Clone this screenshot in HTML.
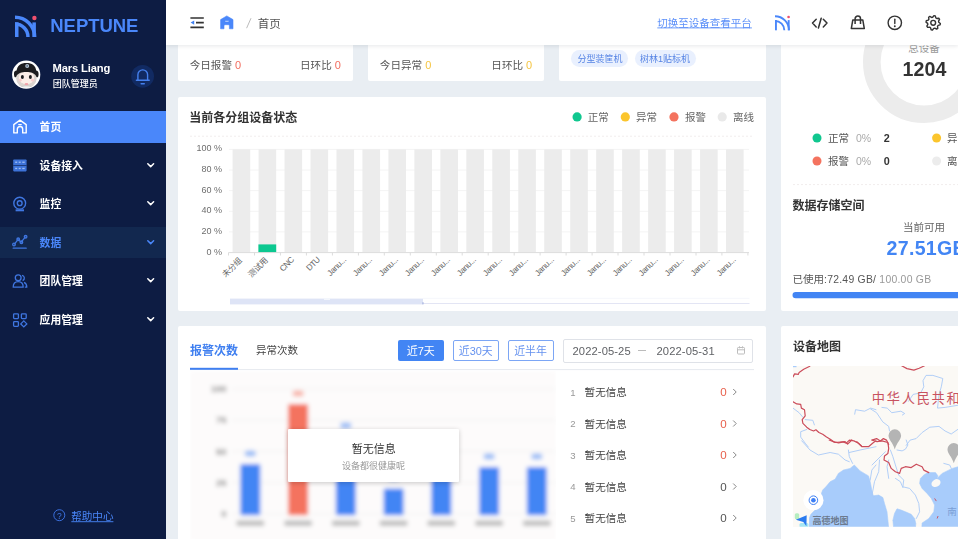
<!DOCTYPE html><html lang="zh-CN"><head><meta charset="utf-8"><title>NEPTUNE - 首页</title><style>

html,body{margin:0;padding:0;}
body{width:958px;height:539px;overflow:hidden;position:relative;background:#e9eef3;font-family:"Liberation Sans","Noto Sans CJK SC",sans-serif;}
#cards div,#ui div{position:absolute;}
svg{position:absolute;left:0;top:0;overflow:hidden;}
svg text{font-family:"Liberation Sans","Noto Sans CJK SC",sans-serif;}
.t{position:absolute;white-space:pre;line-height:1;}
.h{position:absolute;white-space:pre;line-height:1;color:transparent;opacity:0;pointer-events:none;}
#side{position:absolute;left:0;top:0;width:166px;height:539px;background:#0d1c43;}
#head{position:absolute;left:166px;top:0;width:792px;height:45.2px;background:#fff;box-shadow:0 1px 4px rgba(0,21,41,.10);}
#act{position:absolute;left:0;top:110.5px;width:166px;height:32.5px;background:#4a87fa;}
#hov{position:absolute;left:0;top:227px;width:166px;height:30.5px;background:#12284f;}
#ov{position:absolute;left:287.6px;top:429px;width:171.4px;height:53px;background:#fff;box-shadow:0 1px 5px rgba(0,0,0,.2);border-radius:1px;}

</style></head><body>
<div id="cards"><div style="left:178.00px;top:40.00px;width:175.30px;height:41.40px;background:#fff;border-radius:2px;"></div><div style="left:368.00px;top:40.00px;width:176.30px;height:41.40px;background:#fff;border-radius:2px;"></div><div style="left:559.30px;top:40.00px;width:207.00px;height:41.40px;background:#fff;border-radius:2px;"></div><div style="left:178.00px;top:96.50px;width:588.30px;height:214.20px;background:#fff;border-radius:2px;"></div><div style="left:178.00px;top:326.00px;width:588.30px;height:220.00px;background:#fff;border-radius:2px;"></div><div style="left:781.00px;top:40.00px;width:180.00px;height:270.70px;background:#fff;border-radius:2px;"></div><div style="left:781.00px;top:325.60px;width:180.00px;height:220.00px;background:#fff;border-radius:2px;"></div><div style="left:570.80px;top:49.70px;width:57.20px;height:17.40px;background:#e9f0fe;border-radius:9px;"></div><div style="left:634.50px;top:49.70px;width:61.20px;height:17.40px;background:#e9f0fe;border-radius:9px;"></div><div style="left:398.00px;top:340.00px;width:45.50px;height:20.80px;background:#4285f4;border-radius:2px;"></div><div style="left:452.70px;top:340.00px;width:46.00px;height:20.80px;background:#fff;border-radius:2px;border:1px solid #7ca6f5;box-sizing:border-box;"></div><div style="left:507.50px;top:340.00px;width:46.00px;height:20.80px;background:#fff;border-radius:2px;border:1px solid #7ca6f5;box-sizing:border-box;"></div><div style="left:563.30px;top:339.00px;width:190.00px;height:23.50px;background:#fff;border-radius:2px;border:1px solid #dfe2e8;box-sizing:border-box;"></div></div>
<svg width="958" height="539" viewBox="0 0 958 539"><line x1="190" y1="136.2" x2="754" y2="136.2" stroke="#f1eded" stroke-width="1" stroke-dasharray="2 2"/><line x1="793" y1="184.6" x2="958" y2="184.6" stroke="#f1eded" stroke-width="1" stroke-dasharray="2 2"/><circle cx="577.1" cy="116.9" r="4.6" fill="#10c78f"/><circle cx="625.3" cy="116.9" r="4.6" fill="#fbc52d"/><circle cx="674.0" cy="116.9" r="4.6" fill="#f4735f"/><circle cx="722.2" cy="116.9" r="4.6" fill="#e9e9e9"/><line x1="229" y1="149.4" x2="749" y2="149.4" stroke="#f4f4f4" stroke-width="1"/><line x1="229" y1="170.0" x2="749" y2="170.0" stroke="#f4f4f4" stroke-width="1"/><line x1="229" y1="190.6" x2="749" y2="190.6" stroke="#f4f4f4" stroke-width="1"/><line x1="229" y1="211.3" x2="749" y2="211.3" stroke="#f4f4f4" stroke-width="1"/><line x1="229" y1="231.9" x2="749" y2="231.9" stroke="#f4f4f4" stroke-width="1"/><rect x="232.60" y="149.4" width="17.6" height="103" fill="#ececec"/><rect x="258.57" y="149.4" width="17.6" height="103" fill="#ececec"/><rect x="284.54" y="149.4" width="17.6" height="103" fill="#ececec"/><rect x="310.51" y="149.4" width="17.6" height="103" fill="#ececec"/><rect x="336.48" y="149.4" width="17.6" height="103" fill="#ececec"/><rect x="362.45" y="149.4" width="17.6" height="103" fill="#ececec"/><rect x="388.42" y="149.4" width="17.6" height="103" fill="#ececec"/><rect x="414.39" y="149.4" width="17.6" height="103" fill="#ececec"/><rect x="440.36" y="149.4" width="17.6" height="103" fill="#ececec"/><rect x="466.33" y="149.4" width="17.6" height="103" fill="#ececec"/><rect x="492.30" y="149.4" width="17.6" height="103" fill="#ececec"/><rect x="518.27" y="149.4" width="17.6" height="103" fill="#ececec"/><rect x="544.24" y="149.4" width="17.6" height="103" fill="#ececec"/><rect x="570.21" y="149.4" width="17.6" height="103" fill="#ececec"/><rect x="596.18" y="149.4" width="17.6" height="103" fill="#ececec"/><rect x="622.15" y="149.4" width="17.6" height="103" fill="#ececec"/><rect x="648.12" y="149.4" width="17.6" height="103" fill="#ececec"/><rect x="674.09" y="149.4" width="17.6" height="103" fill="#ececec"/><rect x="700.06" y="149.4" width="17.6" height="103" fill="#ececec"/><rect x="726.03" y="149.4" width="17.6" height="103" fill="#ececec"/><rect x="258.4" y="244.4" width="17.8" height="8.2" fill="#0cc890"/><line x1="228.5" y1="252.6" x2="749" y2="252.6" stroke="#dcdcdc" stroke-width="1"/><line x1="228.5" y1="252.6" x2="228.5" y2="255.5" stroke="#dcdcdc" stroke-width="1"/><line x1="254.5" y1="252.6" x2="254.5" y2="255.5" stroke="#dcdcdc" stroke-width="1"/><line x1="280.4" y1="252.6" x2="280.4" y2="255.5" stroke="#dcdcdc" stroke-width="1"/><line x1="306.4" y1="252.6" x2="306.4" y2="255.5" stroke="#dcdcdc" stroke-width="1"/><line x1="332.4" y1="252.6" x2="332.4" y2="255.5" stroke="#dcdcdc" stroke-width="1"/><line x1="358.4" y1="252.6" x2="358.4" y2="255.5" stroke="#dcdcdc" stroke-width="1"/><line x1="384.3" y1="252.6" x2="384.3" y2="255.5" stroke="#dcdcdc" stroke-width="1"/><line x1="410.3" y1="252.6" x2="410.3" y2="255.5" stroke="#dcdcdc" stroke-width="1"/><line x1="436.3" y1="252.6" x2="436.3" y2="255.5" stroke="#dcdcdc" stroke-width="1"/><line x1="462.2" y1="252.6" x2="462.2" y2="255.5" stroke="#dcdcdc" stroke-width="1"/><line x1="488.2" y1="252.6" x2="488.2" y2="255.5" stroke="#dcdcdc" stroke-width="1"/><line x1="514.2" y1="252.6" x2="514.2" y2="255.5" stroke="#dcdcdc" stroke-width="1"/><line x1="540.1" y1="252.6" x2="540.1" y2="255.5" stroke="#dcdcdc" stroke-width="1"/><line x1="566.1" y1="252.6" x2="566.1" y2="255.5" stroke="#dcdcdc" stroke-width="1"/><line x1="592.1" y1="252.6" x2="592.1" y2="255.5" stroke="#dcdcdc" stroke-width="1"/><line x1="618.0" y1="252.6" x2="618.0" y2="255.5" stroke="#dcdcdc" stroke-width="1"/><line x1="644.0" y1="252.6" x2="644.0" y2="255.5" stroke="#dcdcdc" stroke-width="1"/><line x1="670.0" y1="252.6" x2="670.0" y2="255.5" stroke="#dcdcdc" stroke-width="1"/><line x1="696.0" y1="252.6" x2="696.0" y2="255.5" stroke="#dcdcdc" stroke-width="1"/><line x1="721.9" y1="252.6" x2="721.9" y2="255.5" stroke="#dcdcdc" stroke-width="1"/><line x1="747.9" y1="252.6" x2="747.9" y2="255.5" stroke="#dcdcdc" stroke-width="1"/><g transform="translate(240.4 258.5) rotate(-45)"><text x="-24.30" y="3.08" font-size="8.1" fill="#666">未分组</text></g><g transform="translate(266.4 258.5) rotate(-45)"><text x="-24.30" y="3.08" font-size="8.1" fill="#666">测试用</text></g><text transform="translate(292.7 258.0) rotate(-45)" text-anchor="end" font-size="8.3" fill="#666" y="3" textLength="16.72">CNC</text><text transform="translate(318.7 258.0) rotate(-45)" text-anchor="end" font-size="8.3" fill="#666" y="3" textLength="15.86">DTU</text><text transform="translate(344.7 258.0) rotate(-45)" text-anchor="end" font-size="8.3" fill="#666" y="3" textLength="23.17">Janu...</text><text transform="translate(370.6 258.0) rotate(-45)" text-anchor="end" font-size="8.3" fill="#666" y="3" textLength="23.17">Janu...</text><text transform="translate(396.6 258.0) rotate(-45)" text-anchor="end" font-size="8.3" fill="#666" y="3" textLength="23.17">Janu...</text><text transform="translate(422.6 258.0) rotate(-45)" text-anchor="end" font-size="8.3" fill="#666" y="3" textLength="23.17">Janu...</text><text transform="translate(448.6 258.0) rotate(-45)" text-anchor="end" font-size="8.3" fill="#666" y="3" textLength="23.17">Janu...</text><text transform="translate(474.5 258.0) rotate(-45)" text-anchor="end" font-size="8.3" fill="#666" y="3" textLength="23.17">Janu...</text><text transform="translate(500.5 258.0) rotate(-45)" text-anchor="end" font-size="8.3" fill="#666" y="3" textLength="23.17">Janu...</text><text transform="translate(526.5 258.0) rotate(-45)" text-anchor="end" font-size="8.3" fill="#666" y="3" textLength="23.17">Janu...</text><text transform="translate(552.4 258.0) rotate(-45)" text-anchor="end" font-size="8.3" fill="#666" y="3" textLength="23.17">Janu...</text><text transform="translate(578.4 258.0) rotate(-45)" text-anchor="end" font-size="8.3" fill="#666" y="3" textLength="23.17">Janu...</text><text transform="translate(604.4 258.0) rotate(-45)" text-anchor="end" font-size="8.3" fill="#666" y="3" textLength="23.17">Janu...</text><text transform="translate(630.3 258.0) rotate(-45)" text-anchor="end" font-size="8.3" fill="#666" y="3" textLength="23.17">Janu...</text><text transform="translate(656.3 258.0) rotate(-45)" text-anchor="end" font-size="8.3" fill="#666" y="3" textLength="23.17">Janu...</text><text transform="translate(682.3 258.0) rotate(-45)" text-anchor="end" font-size="8.3" fill="#666" y="3" textLength="23.17">Janu...</text><text transform="translate(708.3 258.0) rotate(-45)" text-anchor="end" font-size="8.3" fill="#666" y="3" textLength="23.17">Janu...</text><text transform="translate(734.2 258.0) rotate(-45)" text-anchor="end" font-size="8.3" fill="#666" y="3" textLength="23.17">Janu...</text><rect x="230" y="298.6" width="193" height="5.8" fill="#dee4f6"/><line x1="423" y1="303.5" x2="749.5" y2="303.5" stroke="#e3e5f4" stroke-width="1"/><line x1="423" y1="298.3" x2="749.5" y2="298.3" stroke="#f6f7fc" stroke-width="1"/><rect x="422" y="302.3" width="1.800" height="2" fill="#b9c3e6"/><rect x="324" y="298" width="6" height="2" fill="#f3f6fc"/><line x1="190" y1="369.6" x2="754" y2="369.6" stroke="#e6e9ef" stroke-width="1"/><rect x="190" y="367.8" width="48" height="2" fill="#3f7ff0"/><path d="M638 350.5h8" stroke="#bbb" stroke-width="1" fill="none"/><g stroke="#bdbdbd" stroke-width="1" fill="none"><rect x="737.5" y="347.5" width="7" height="6.5" rx="0.8"/><path d="M737.5 349.8h7M739.5 346.3v2M742.5 346.3v2"/></g><path d="M733.2 389.0l3 3l-3 3" stroke="#888" stroke-width="1" fill="none"/><path d="M733.2 420.5l3 3l-3 3" stroke="#888" stroke-width="1" fill="none"/><path d="M733.2 452.0l3 3l-3 3" stroke="#888" stroke-width="1" fill="none"/><path d="M733.2 483.5l3 3l-3 3" stroke="#888" stroke-width="1" fill="none"/><path d="M733.2 515.0l3 3l-3 3" stroke="#888" stroke-width="1" fill="none"/><circle cx="924" cy="62" r="52.2" fill="none" stroke="#ececec" stroke-width="17.6"/><circle cx="817.0" cy="138.0" r="4.5" fill="#10c78f"/><circle cx="817.0" cy="161.0" r="4.5" fill="#f4735f"/><circle cx="936.6" cy="138" r="4.5" fill="#fbc52d"/><circle cx="936.6" cy="161" r="4.5" fill="#ececec"/><rect x="792.5" y="291.9" width="200" height="6.4" rx="3.2" fill="#4285f4"/></svg>
<svg width="958" height="539" viewBox="0 0 958 539"><defs><clipPath id="bc"><rect x="190" y="371" width="366" height="168"/></clipPath><filter id="bl" x="-5%" y="-5%" width="110%" height="110%"><feGaussianBlur stdDeviation="2.000"/></filter></defs><g clip-path="url(#bc)"><g filter="url(#bl)"><rect x="190" y="371" width="366" height="170" fill="#fdfbfb"/><line x1="232" y1="389.0" x2="556" y2="389.0" stroke="#eee" stroke-width="1"/><text x="226.5" y="392.2" text-anchor="end" font-size="9.5" font-weight="bold" fill="#808080">100</text><line x1="232" y1="420.2" x2="556" y2="420.2" stroke="#eee" stroke-width="1"/><text x="226.5" y="423.4" text-anchor="end" font-size="9.5" font-weight="bold" fill="#808080">75</text><line x1="232" y1="451.4" x2="556" y2="451.4" stroke="#eee" stroke-width="1"/><text x="226.5" y="454.6" text-anchor="end" font-size="9.5" font-weight="bold" fill="#808080">50</text><line x1="232" y1="482.6" x2="556" y2="482.6" stroke="#eee" stroke-width="1"/><text x="226.5" y="485.8" text-anchor="end" font-size="9.5" font-weight="bold" fill="#808080">25</text><line x1="232" y1="513.8" x2="556" y2="513.8" stroke="#eee" stroke-width="1"/><text x="226.5" y="517.0" text-anchor="end" font-size="9.5" font-weight="bold" fill="#808080">0</text><rect x="240.3" y="464.0" width="20" height="51.2" rx="1.5" fill="#4285f4"/><rect x="244.8" y="450.5" width="11" height="6" rx="2.5" fill="#4285f4" opacity="0.5"/><rect x="236.3" y="520.5" width="28" height="5.5" rx="2" fill="#9a9a9a" opacity="0.62"/><rect x="288.1" y="404.0" width="20" height="111.2" rx="1.5" fill="#f4735f"/><rect x="292.6" y="390.5" width="11" height="6" rx="2.5" fill="#f4735f" opacity="0.5"/><rect x="284.1" y="520.5" width="28" height="5.5" rx="2" fill="#9a9a9a" opacity="0.62"/><rect x="335.8" y="436.0" width="20" height="79.2" rx="1.5" fill="#4285f4"/><rect x="340.3" y="422.5" width="11" height="6" rx="2.5" fill="#4285f4" opacity="0.5"/><rect x="331.8" y="520.5" width="28" height="5.5" rx="2" fill="#9a9a9a" opacity="0.62"/><rect x="383.6" y="488.6" width="20" height="26.6" rx="1.5" fill="#4285f4"/><rect x="388.1" y="475.1" width="11" height="6" rx="2.5" fill="#4285f4" opacity="0.5"/><rect x="379.6" y="520.5" width="28" height="5.5" rx="2" fill="#9a9a9a" opacity="0.62"/><rect x="431.3" y="452.0" width="20" height="63.2" rx="1.5" fill="#4285f4"/><rect x="435.8" y="438.5" width="11" height="6" rx="2.5" fill="#4285f4" opacity="0.5"/><rect x="427.3" y="520.5" width="28" height="5.5" rx="2" fill="#9a9a9a" opacity="0.62"/><rect x="479.1" y="467.0" width="20" height="48.2" rx="1.5" fill="#4285f4"/><rect x="483.6" y="453.5" width="11" height="6" rx="2.5" fill="#4285f4" opacity="0.5"/><rect x="475.1" y="520.5" width="28" height="5.5" rx="2" fill="#9a9a9a" opacity="0.62"/><rect x="526.8" y="467.0" width="20" height="48.2" rx="1.5" fill="#4285f4"/><rect x="531.3" y="453.5" width="11" height="6" rx="2.5" fill="#4285f4" opacity="0.5"/><rect x="522.8" y="520.5" width="28" height="5.5" rx="2" fill="#9a9a9a" opacity="0.62"/></g></g></svg>
<div id="ov"></div>
<svg width="958" height="539" viewBox="0 0 958 539"><defs><clipPath id="mc"><rect x="793" y="366" width="165" height="160.800"/></clipPath></defs><g clip-path="url(#mc)"><rect x="793" y="366" width="170" height="161.500" fill="#fbf9f5"/><polygon points="854.3,465.0 850.1,468.4 843.4,470.1 838.4,473.4 835.1,479.2 830.1,481.7 825.9,486.8 822.6,490.1 820.9,495.1 819.2,503.5 815.0,510.1 810.9,514.3 809.2,518.5 809.2,528.5 888.7,528.5 887.9,520.2 887.0,511.8 884.5,503.5 882.9,497.6 878.7,495.1 872.0,495.9 876.0,498.4 873.5,496.8 871.8,490.1 870.2,481.7 868.5,475.9 864.3,473.4 860.1,470.9 856.8,467.6" fill="#a8ccfb" stroke="#a8ccfb" stroke-width="0.6" stroke-linejoin="round"/><polygon points="893.7,528.5 892.9,520.2 894.5,513.5 897.0,508.8 901.2,510.1 905.4,511.8 911.2,514.3 914.6,518.5 915.8,523.5 915.4,528.5" fill="#a8ccfb" stroke="#a8ccfb" stroke-width="0.6" stroke-linejoin="round"/><polygon points="921.8,528.5 922.1,523.0 928.8,518.5 933.8,511.8 934.6,505.1 931.3,498.4 927.1,493.4 922.1,488.4 919.6,483.4 920.4,478.4 923.8,475.1 927.9,472.6 935.5,472.6 938.0,475.9 936.8,478.7 942.1,473.4 947.1,470.9 952.2,468.4 960.5,466.1 960.5,528.5" fill="#a8ccfb" stroke="#a8ccfb" stroke-width="0.6" stroke-linejoin="round"/><ellipse cx="936" cy="483.1" rx="4.8" ry="3.7" fill="#fbf9f5" transform="rotate(-30 936 483.1)"/><rect x="793" y="366" width="3.5" height="1.2" fill="#a8ccfb"/><polyline points="793.0,408.1 799.1,412.7 802.9,417.3" fill="none" stroke="#a9c9f7" stroke-width="0.9" stroke-linejoin="round" stroke-linecap="round"/><polyline points="805.2,419.6 812.8,420.3 814.4,424.9" fill="none" stroke="#a9c9f7" stroke-width="0.9" stroke-linejoin="round" stroke-linecap="round"/><polyline points="806.7,429.5 800.7,431.7 800.7,437.1 805.2,443.2 808.3,447.0" fill="none" stroke="#a9c9f7" stroke-width="0.9" stroke-linejoin="round" stroke-linecap="round"/><polyline points="854.7,414.2 855.5,409.7 864.6,411.2 870.7,408.1 876.0,409.7" fill="none" stroke="#a9c9f7" stroke-width="0.9" stroke-linejoin="round" stroke-linecap="round"/><polyline points="908.5,401.3 913.1,394.4 920.7,392.9 923.8,386.8 923.0,380.7 926.0,375.4 932.9,375.4 942.8,378.5 941.3,386.8 939.0,394.4 937.5,408.1 945.1,407.4 958.8,405.1" fill="none" stroke="#a9c9f7" stroke-width="0.9" stroke-linejoin="round" stroke-linecap="round"/><polyline points="870.5,408.9 876.6,412.7 882.7,421.8 888.7,426.4 889.5,431.0" fill="none" stroke="#a9c9f7" stroke-width="0.9" stroke-linejoin="round" stroke-linecap="round"/><polyline points="881.9,407.4 887.2,408.1 891.8,412.7 900.9,411.2 904.7,413.5 902.4,415.0" fill="none" stroke="#a9c9f7" stroke-width="0.9" stroke-linejoin="round" stroke-linecap="round"/><polyline points="906.2,445.4 910.1,440.1 916.1,438.6 922.2,432.5 929.8,427.2 939.0,426.4 945.1,431.0 951.2,434.0 958.8,428.7" fill="none" stroke="#a9c9f7" stroke-width="0.9" stroke-linejoin="round" stroke-linecap="round"/><polyline points="801.7,440.8 810.0,450.0 818.4,455.0 830.1,452.5 838.4,454.2 845.1,460.0 849.3,461.7" fill="none" stroke="#a9c9f7" stroke-width="0.9" stroke-linejoin="round" stroke-linecap="round"/><polyline points="848.4,450.0 849.3,456.7 852.6,463.4" fill="none" stroke="#a9c9f7" stroke-width="0.9" stroke-linejoin="round" stroke-linecap="round"/><polyline points="849.3,452.5 860.1,450.0 876.0,446.7" fill="none" stroke="#a9c9f7" stroke-width="0.9" stroke-linejoin="round" stroke-linecap="round"/><polyline points="870.2,480.1 871.8,470.1 876.0,465.0" fill="none" stroke="#a9c9f7" stroke-width="0.9" stroke-linejoin="round" stroke-linecap="round"/><polyline points="872.0,465.0 877.0,460.0 882.0,455.0 885.4,451.7" fill="none" stroke="#a9c9f7" stroke-width="0.9" stroke-linejoin="round" stroke-linecap="round"/><polyline points="872.0,495.1 874.5,481.7 878.7,471.7 879.5,460.0" fill="none" stroke="#a9c9f7" stroke-width="0.9" stroke-linejoin="round" stroke-linecap="round"/><polyline points="888.7,478.4 887.0,466.7 888.7,460.0" fill="none" stroke="#a9c9f7" stroke-width="0.9" stroke-linejoin="round" stroke-linecap="round"/><polyline points="890.4,450.0 892.9,456.7 895.4,465.0 898.7,475.1 903.7,480.1 902.9,486.8 909.6,488.4 915.4,495.1 918.8,503.5 919.6,511.8 916.3,518.5" fill="none" stroke="#a9c9f7" stroke-width="0.9" stroke-linejoin="round" stroke-linecap="round"/><polyline points="895.4,478.4 900.4,481.7 902.9,487.6" fill="none" stroke="#a9c9f7" stroke-width="0.9" stroke-linejoin="round" stroke-linecap="round"/><polyline points="906.2,440.0 907.9,445.0 905.4,449.2 902.1,450.9 897.0,450.0" fill="none" stroke="#a9c9f7" stroke-width="0.9" stroke-linejoin="round" stroke-linecap="round"/><polyline points="943.8,463.4 949.7,465.0 951.3,468.4" fill="none" stroke="#a9c9f7" stroke-width="0.9" stroke-linejoin="round" stroke-linecap="round"/><polyline points="793.0,376.9 794.6,373.9 798.4,374.4 799.1,372.4 803.7,369.3 809.8,366.3" fill="none" stroke="#cb4c5a" stroke-width="1.2" stroke-linejoin="round" stroke-linecap="round"/><polyline points="793.0,401.7 796.8,403.9 800.7,404.3 801.4,408.1 804.5,409.7 805.2,415.8 802.2,419.6 802.9,423.4 806.7,427.2 809.8,429.5 813.6,431.0 815.9,429.8 818.9,432.5 822.7,434.3 826.5,437.1 830.3,439.3 834.1,441.9 838.7,442.8 843.3,441.9 846.3,443.2 849.4,440.1 853.9,440.9 858.5,443.2 861.5,446.0" fill="none" stroke="#cb4c5a" stroke-width="1.2" stroke-linejoin="round" stroke-linecap="round"/><polyline points="901.7,365.8 907.0,368.6 913.9,370.1 919.2,368.3 924.5,365.8" fill="none" stroke="#cb4c5a" stroke-width="1.2" stroke-linejoin="round" stroke-linecap="round"/><polyline points="829.2,440.0 835.1,442.5 845.1,441.7 847.6,444.2 851.8,440.0" fill="none" stroke="#cb4c5a" stroke-width="1.2" stroke-linejoin="round" stroke-linecap="round"/><polyline points="856.8,441.7 861.8,446.7 868.5,446.7 873.5,442.5 876.0,440.8" fill="none" stroke="#cb4c5a" stroke-width="1.2" stroke-linejoin="round" stroke-linecap="round"/><polyline points="872.0,440.0 877.0,441.7 882.0,440.8 887.9,442.5 888.7,448.3 887.9,453.4 884.5,455.9 884.0,460.0 888.7,462.5 891.2,468.4 895.4,471.7 899.6,473.4 901.2,468.4 905.4,466.7 911.2,467.6 916.3,464.2 922.1,466.7 923.8,470.1 928.8,472.6" fill="none" stroke="#cb4c5a" stroke-width="1.2" stroke-linejoin="round" stroke-linecap="round"/><polyline points="872.0,440.1 876.6,438.6 880.4,440.9 883.4,438.6 886.5,440.1 888.7,444.7" fill="none" stroke="#cb4c5a" stroke-width="1.2" stroke-linejoin="round" stroke-linecap="round"/><polyline points="934.6,498.4 936.3,501.1" fill="none" stroke="#cb4c5a" stroke-width="0.9"/><polyline points="938.1,516.0 937.1,518.5" fill="none" stroke="#cb4c5a" stroke-width="0.9"/><path d="M888.5 435.6 a6.3 6.3 0 1 1 12.6 0 c0 4 -4.400 7.200 -6.3 13.800 c-1.900 -6.600 -6.3 -9.800 -6.3 -13.800z" fill="#b4b4b4"/><path d="M947.5 449.4 a6.3 6.3 0 1 1 12.6 0 c0 4 -4.400 7.200 -6.3 13.800 c-1.900 -6.600 -6.3 -9.800 -6.3 -13.800z" fill="#b4b4b4"/><circle cx="813.4" cy="500.2" r="10.1" fill="#fff"/><circle cx="813.4" cy="500.2" r="4.3" fill="none" stroke="#3d7ff5" stroke-width="1"/><circle cx="813.4" cy="500.2" r="2.3" fill="#3d7ff5"/><rect x="793" y="512" width="16" height="16" fill="#fbf9f5"/><rect x="794.800" y="513.300" width="4.400" height="6" rx="1.5" fill="#b6edc0"/><rect x="799.500" y="523" width="9" height="4.500" rx="1.5" fill="#a6e6f4"/><path d="M795.800 519.800 L806.700 515.300 L806.400 526.200 L803.300 521.900 Z" fill="#2b7bef"/><text x="871.80 886.75 901.70 916.65 931.60 946.55 961.50" y="402.62" font-size="13.2" fill="#c8525f">中华人民共和国</text><text x="947.20 957.70" y="514.61" font-size="9.5" fill="#7b9fd6">南海</text><text x="812.50" y="523.62" font-size="9" font-weight="bold" fill="#6c7a8e">高德地图</text></g></svg>
<svg width="958" height="539" viewBox="0 0 958 539"><defs><clipPath id="hc"><rect x="781" y="45.2" width="177" height="40"/></clipPath></defs><g clip-path="url(#hc)"><text x="908.25" y="51.79" font-size="10.5" fill="#999">总设备</text></g></svg>
<div id="side"><div id="act"></div><div id="hov"></div></div><div id="head"></div>
<svg width="958" height="539" viewBox="0 0 958 539" style="will-change:transform"><g transform="translate(15.00 15.70) scale(1.0000)"><g fill="none" stroke="#4a87fa" stroke-width="3.50" stroke-linecap="butt"><path d="M0 1.65 A19.65 19.65 0 0 1 19.65 21.3"/><path d="M0 8.35 A12.95 12.95 0 0 1 12.95 21.3"/></g><rect x="0" y="6.60" width="3.50" height="14.70" fill="#4a87fa"/><rect x="17.40" y="6.700" width="3.50" height="14.600" fill="#4a87fa"/><circle cx="19.400" cy="2.300" r="2.20" fill="#f0506e"/></g><g transform="translate(775.00 15.40) scale(0.7000)"><g fill="none" stroke="#4a87fa" stroke-width="2.70" stroke-linecap="butt"><path d="M0 1.25 A20.05 20.05 0 0 1 20.05 21.3"/><path d="M0 7.95 A13.35 13.35 0 0 1 13.35 21.3"/></g><rect x="0" y="6.60" width="2.70" height="14.70" fill="#4a87fa"/><rect x="18.20" y="6.700" width="2.70" height="14.600" fill="#4a87fa"/><circle cx="19.400" cy="2.300" r="1.90" fill="#f0506e"/></g><g><circle cx="26.200" cy="74.700" r="14.100" fill="#fff"/><clipPath id="avc"><circle cx="26.200" cy="74.700" r="13.300"/></clipPath><g clip-path="url(#avc)"><ellipse cx="26.400" cy="78.500" rx="10.200" ry="9.500" fill="#ddd5d0"/><path d="M17.500 92c0.500-4.500 4-6 9-6s8.500 1.500 9 6z" fill="#f6f6f6" stroke="#b9b9b9" stroke-width="0.5"/><ellipse cx="26.500" cy="77.700" rx="7.700" ry="6.500" fill="#fcefe9"/><path d="M14 74.500C13.600 69 19 70.200 26.300 70.200C33.500 70.200 39 69 38.600 74.500C38.400 77.800 37 78 36.200 76.400C35.200 73.400 31 72 26.300 72C21.500 72 17.400 73.400 16.400 76.400C15.600 78 14.200 77.800 14 74.500Z" fill="#1d1d20"/><path d="M16.600 71.800C16.600 65.200 21 62.900 26.400 62.900C31.800 62.900 36.200 65.200 36.200 71.800Z" fill="#1d1d20"/><circle cx="27.200" cy="65.900" r="2" fill="#b5c3d2"/><circle cx="27.200" cy="65.900" r="0.900" fill="#5d7288"/><ellipse cx="22.400" cy="76.900" rx="1.500" ry="2" fill="#1f1f22"/><ellipse cx="30.400" cy="76.900" rx="1.500" ry="2" fill="#1f1f22"/><circle cx="20.300" cy="80.200" r="1.400" fill="#f9cccc"/><circle cx="32.600" cy="80.200" r="1.400" fill="#f9cccc"/><ellipse cx="26.500" cy="84.200" rx="1.900" ry="1.100" fill="#f2a3ab"/></g></g><circle cx="142.600" cy="76.300" r="11.400" fill="#112a62"/><g fill="none" stroke="#4580ee" stroke-width="1.4" stroke-linecap="round"><path d="M137.900 80.200v-5.500a4.850 4.850 0 0 1 9.700 0v5.500"/><path d="M136.400 80.300h12.800"/><path d="M141.200 83.700h3" stroke-width="1.6"/></g><g transform="translate(12.20 119.20) scale(1.0000)" fill="none" stroke="#fff" stroke-width="1.40" stroke-linejoin="round" stroke-linecap="round"><path d="M1.600 5.400 L7.800 0.900 L14 5.400 V13.700 H10.500 V10 a2.700 2.700 0 0 0 -5.400 0 V13.700 H1.600 Z"/><path d="M6.500 5.400h2.600" stroke-width="1.1"/></g><rect x="13.200" y="159.400" width="13.400" height="12" rx="0.8" fill="#3d72d8"/><rect x="13.200" y="165.100" width="13.400" height="0.600" fill="#0d1c43"/><g fill="#9dbcf5"><rect x="15.200" y="161.600" width="2" height="1.300"/><rect x="18.700" y="161.600" width="2" height="1.300"/><rect x="22.300" y="161.600" width="2.400" height="1.300"/><rect x="15.200" y="167.800" width="2" height="1.300"/><rect x="18.700" y="167.800" width="2" height="1.300"/><rect x="22.300" y="167.800" width="2.400" height="1.300"/></g><g fill="none" stroke="#3f76e0" stroke-width="1.4"><circle cx="19.700" cy="203.200" r="5.900"/><circle cx="19.700" cy="203.200" r="2.400"/><path d="M15.600 210.300h8.400" stroke-width="2"/></g><g fill="none" stroke="#3f76e0" stroke-width="1.300" stroke-linecap="round"><path d="M14.600 243.800l3.400-4.200 3.200 2.600 4-5"/><circle cx="14" cy="244.500" r="1.300"/><circle cx="18.200" cy="239.300" r="1.300"/><circle cx="21.400" cy="242.300" r="1.300"/><circle cx="25.600" cy="236.800" r="1.300"/><path d="M13.200 248.200h13"/></g><g fill="none" stroke="#3f76e0" stroke-width="1.300" stroke-linejoin="round"><circle cx="18.200" cy="277.800" r="2.900"/><path d="M13.200 287.200c0-3.600 2-5.600 5-5.600s5 2 5 5.600z"/><path d="M22 275.400a2.700 2.700 0 0 1 0.600 5.200M24 282.400c2 .8 2.800 2.400 2.800 4.800h-2"/></g><g fill="none" stroke="#3f76e0" stroke-width="1.300"><rect x="13.600" y="313.800" width="4.800" height="4.800" rx="0.800"/><rect x="21.400" y="313.800" width="4.800" height="4.800" rx="0.800"/><rect x="13.600" y="321.600" width="4.800" height="4.800" rx="0.800"/><path d="M23.800 320.900l3 3-3 3-3-3z"/></g><path d="M147.800 163.800l2.900 2.800 2.900-2.800" fill="none" stroke="#fff" stroke-width="1.500" stroke-linecap="round" stroke-linejoin="round"/><path d="M147.800 201.800l2.900 2.800 2.900-2.800" fill="none" stroke="#fff" stroke-width="1.500" stroke-linecap="round" stroke-linejoin="round"/><path d="M147.800 240.800l2.900 2.800 2.900-2.800" fill="none" stroke="#4a87fa" stroke-width="1.500" stroke-linecap="round" stroke-linejoin="round"/><path d="M147.800 278.800l2.900 2.800 2.900-2.800" fill="none" stroke="#fff" stroke-width="1.500" stroke-linecap="round" stroke-linejoin="round"/><path d="M147.800 317.800l2.900 2.800 2.900-2.800" fill="none" stroke="#fff" stroke-width="1.500" stroke-linecap="round" stroke-linejoin="round"/><circle cx="59.300" cy="515.200" r="5.500" fill="none" stroke="#3b70de" stroke-width="1"/><line x1="71.300" y1="521.7" x2="113.400" y2="521.7" stroke="#4a87fa" stroke-width="0.9"/><g stroke="#333" stroke-width="1.700"><path d="M190.400 18h13.400M196 22.600h7.800M190.400 27.300h13.400"/></g><path d="M194.200 20.400v4.400l-3.600-2.200z" fill="#3f7ff0"/><path d="M226.800 15.900 L233 19.6 V28.800 H229.400 V25.700 a1 1 0 0 0 -1 -1 h-3.400 a1 1 0 0 0 -1 1 V28.800 H220.600 V19.600 Z M225 20.800 h3.800 v1.100 h-3.800 Z" fill="#4a87fa" fill-rule="evenodd" stroke="#4a87fa" stroke-width="0.6" stroke-linejoin="round"/><path d="M251 18.200l-4.400 10" stroke="#bbb" stroke-width="1" fill="none"/><line x1="657.3" y1="27.9" x2="751.900" y2="27.9" stroke="#5b8ff9" stroke-width="0.9"/><g fill="none" stroke="#333" stroke-width="1.500" stroke-linecap="round" stroke-linejoin="round"><path d="M816.200 19.300l-3.700 3.800 3.700 3.800M823.300 19.300l3.700 3.800-3.700 3.800M821.200 18.200l-2.800 9.800"/></g><g fill="none" stroke="#333" stroke-width="1.500" stroke-linejoin="round"><path d="M852.800 19.900h10l1.500 8.700h-13z"/><path d="M855.100 24v-5.200a2.700 2.700 0 0 1 5.400 0v5.200"/></g><g fill="none" stroke="#333" stroke-width="1.400" stroke-linecap="round"><circle cx="894.800" cy="22.800" r="6.700"/><path d="M894.800 19.200v4.400"/></g><circle cx="894.800" cy="26.200" r="0.950" fill="#333"/><polygon points="940.37,23.51 940.09,24.89 938.14,25.44 937.53,26.35 937.77,28.37 936.59,29.15 934.83,28.16 933.75,28.37 932.49,29.97 931.11,29.69 930.56,27.74 929.65,27.13 927.63,27.37 926.85,26.19 927.84,24.43 927.63,23.35 926.03,22.09 926.31,20.71 928.26,20.16 928.87,19.25 928.63,17.23 929.81,16.45 931.57,17.44 932.65,17.23 933.91,15.63 935.29,15.91 935.84,17.86 936.75,18.47 938.77,18.23 939.55,19.41 938.56,21.17 938.77,22.25" fill="none" stroke="#333" stroke-width="1.400" stroke-linejoin="round"/><circle cx="933.200" cy="22.800" r="2.400" fill="none" stroke="#333" stroke-width="1.400"/><text x="189.70" y="69.03" font-size="10.6" fill="#555">今日报警</text><text x="300.00" y="69.03" font-size="10.6" fill="#555">日环比</text><text x="379.80" y="69.03" font-size="10.6" fill="#555">今日异常</text><text x="491.30" y="69.03" font-size="10.6" fill="#555">日环比</text><text x="577.40" y="62.22" font-size="9" fill="#5583e4">分型装筐机</text><text x="640.00" y="62.22" font-size="9" fill="#5583e4">树林</text><text x="663.12" y="62.22" font-size="9" fill="#5583e4">贴标机</text><text x="189.30" y="121.96" font-size="12" font-weight="bold" fill="#333">当前各分组设备状态</text><text x="587.80" y="120.89" font-size="10.5" fill="#666">正常</text><text x="636.00" y="120.89" font-size="10.5" fill="#666">异常</text><text x="685.00" y="120.89" font-size="10.5" fill="#666">报警</text><text x="733.00" y="120.89" font-size="10.5" fill="#666">离线</text><text x="190.00" y="355.36" font-size="12" font-weight="bold" fill="#3f7ff0">报警次数</text><text x="256.00" y="353.79" font-size="10.5" fill="#444">异常次数</text><text x="406.74" y="354.78" font-size="11" fill="#fff">近</text><text x="423.86" y="354.78" font-size="11" fill="#fff">天</text><text x="458.84" y="354.74" font-size="10.9" fill="#6592ef">近</text><text x="481.86" y="354.74" font-size="10.9" fill="#6592ef">天</text><text x="514.15" y="354.74" font-size="10.9" fill="#6592ef">近半年</text><text x="584.60" y="396.03" font-size="10.6" fill="#444">暂无信息</text><text x="584.60" y="427.53" font-size="10.6" fill="#444">暂无信息</text><text x="584.60" y="459.03" font-size="10.6" fill="#444">暂无信息</text><text x="584.60" y="490.53" font-size="10.6" fill="#444">暂无信息</text><text x="584.60" y="522.03" font-size="10.6" fill="#444">暂无信息</text><text x="351.70" y="452.68" font-size="11" fill="#333">暂无信息</text><text x="341.90" y="469.32" font-size="9" fill="#999">设备都很健康呢</text><text x="828.00" y="141.99" font-size="10.5" fill="#555">正常</text><text x="828.00" y="164.99" font-size="10.5" fill="#555">报警</text><text x="947.00" y="141.99" font-size="10.5" fill="#555">异常</text><text x="947.00" y="164.99" font-size="10.5" fill="#555">离线</text><text x="792.50" y="210.16" font-size="12" font-weight="bold" fill="#333">数据存储空间</text><text x="903.00" y="230.69" font-size="10.5" fill="#666">当前可用</text><text x="792.50" y="282.79" font-size="10.5" fill="#555">已使用</text><text x="793.00" y="351.36" font-size="12" font-weight="bold" fill="#333">设备地图</text><text x="52.80" y="87.42" font-size="9" font-weight="500" fill="#fff">团队管理员</text><text x="39.60" y="131.10" font-size="10.8" font-weight="bold" fill="#fff">首页</text><text x="39.60" y="170.10" font-size="10.8" font-weight="bold" fill="#fff">设备接入</text><text x="39.60" y="208.10" font-size="10.8" font-weight="bold" fill="#fff">监控</text><text x="39.60" y="247.10" font-size="10.8" font-weight="bold" fill="#4a87fa">数据</text><text x="39.60" y="285.10" font-size="10.8" font-weight="bold" fill="#fff">团队管理</text><text x="39.60" y="324.10" font-size="10.8" font-weight="bold" fill="#fff">应用管理</text><text x="71.20" y="520.03" font-size="10.6" fill="#4a87fa">帮助中心</text><text x="257.80" y="27.57" font-size="11.5" fill="#555">首页</text><text x="657.30" y="26.69" font-size="10.5" fill="#5b8ff9">切换至设备查看平台</text><text x="235.10" y="68.94" font-size="11.00" fill="#f26d5f">0</text><text x="334.80" y="68.94" font-size="11.00" fill="#f26d5f">0</text><text x="425.20" y="68.94" font-size="11.00" fill="#f5c542">0</text><text x="526.10" y="68.94" font-size="11.00" fill="#f5c542">0</text><text x="658.00" y="62.09" font-size="9.20" fill="#5583e4">1</text><text x="196.48" y="151.42" font-size="9.00" fill="#6e6e6e" textLength="25.52">100 %</text><text x="201.49" y="172.04" font-size="9.00" fill="#6e6e6e" textLength="20.51">80 %</text><text x="201.49" y="192.66" font-size="9.00" fill="#6e6e6e" textLength="20.51">60 %</text><text x="201.49" y="213.28" font-size="9.00" fill="#6e6e6e" textLength="20.51">40 %</text><text x="201.49" y="233.90" font-size="9.00" fill="#6e6e6e" textLength="20.51">20 %</text><text x="206.49" y="254.52" font-size="9.00" fill="#6e6e6e" textLength="15.51">0 %</text><text x="417.74" y="354.54" font-size="11.00" fill="#fff">7</text><text x="469.74" y="354.50" font-size="10.90" fill="#6592ef" textLength="12.12">30</text><text x="572.50" y="354.71" font-size="11.20" fill="#606266" textLength="58.18">2022-05-25</text><text x="656.50" y="354.71" font-size="11.20" fill="#606266" textLength="58.18">2022-05-31</text><text x="570.30" y="395.74" font-size="9.60" fill="#999">1</text><text x="720.30" y="396.15" font-size="11.60" fill="#e8604c">0</text><text x="570.30" y="427.24" font-size="9.60" fill="#999">2</text><text x="720.30" y="427.65" font-size="11.60" fill="#e8604c">0</text><text x="570.30" y="458.74" font-size="9.60" fill="#999">3</text><text x="720.30" y="459.15" font-size="11.60" fill="#e8604c">0</text><text x="570.30" y="490.24" font-size="9.60" fill="#999">4</text><text x="720.30" y="490.65" font-size="11.60" fill="#555">0</text><text x="570.30" y="521.74" font-size="9.60" fill="#999">5</text><text x="720.30" y="522.15" font-size="11.60" fill="#555">0</text><text x="902.60" y="75.72" font-size="19.60" fill="#333" font-weight="bold" textLength="43.90">1204</text><text x="856.00" y="141.76" font-size="10.50" fill="#aaa" textLength="15.18">0%</text><text x="883.70" y="141.87" font-size="10.80" fill="#333" font-weight="bold">2</text><text x="856.00" y="164.76" font-size="10.50" fill="#aaa" textLength="15.18">0%</text><text x="883.70" y="164.87" font-size="10.80" fill="#333" font-weight="bold">0</text><text x="886.50" y="255.02" font-size="19.60" fill="#4285f4" font-weight="bold" textLength="80.24">27.51GB</text><text x="824.00" y="282.52" font-size="10.40" fill="#555" textLength="51.97">:72.49 GB/</text><text x="879.36" y="282.52" font-size="10.40" fill="#999" textLength="51.72">100.00 GB</text><text x="56.94" y="518.54" font-size="8.50" fill="#3f76e6">?</text><text x="50.30" y="32.42" font-size="18.50" fill="#4a87fa" font-weight="bold" textLength="88.10">NEPTUNE</text><text x="52.60" y="72.06" font-size="11.20" fill="#fff" font-weight="bold" textLength="57.77">Mars Liang</text></svg>
<div id="hid"><span class="h" style="left:189.7px;top:59.7px;font-size:10.6px">今日报警</span><span class="h" style="left:300.0px;top:59.7px;font-size:10.6px">日环比</span><span class="h" style="left:379.8px;top:59.7px;font-size:10.6px">今日异常</span><span class="h" style="left:491.3px;top:59.7px;font-size:10.6px">日环比</span><span class="h" style="left:577.4px;top:54.3px;font-size:9.0px">分型装筐机</span><span class="h" style="left:640.0px;top:54.3px;font-size:9.0px">树林1贴标机</span><span class="h" style="left:189.3px;top:111.4px;font-size:12.0px">当前各分组设备状态</span><span class="h" style="left:587.8px;top:111.7px;font-size:10.5px">正常</span><span class="h" style="left:636.0px;top:111.7px;font-size:10.5px">异常</span><span class="h" style="left:685.0px;top:111.7px;font-size:10.5px">报警</span><span class="h" style="left:733.0px;top:111.7px;font-size:10.5px">离线</span><span class="h" style="left:-24.3px;top:-4.0px;font-size:8.1px">未分组</span><span class="h" style="left:-24.3px;top:-4.0px;font-size:8.1px">测试用</span><span class="h" style="left:190.0px;top:344.8px;font-size:12.0px">报警次数</span><span class="h" style="left:256.0px;top:344.6px;font-size:10.5px">异常次数</span><span class="h" style="left:406.7px;top:345.1px;font-size:11.0px">近7天</span><span class="h" style="left:458.8px;top:345.2px;font-size:10.9px">近30天</span><span class="h" style="left:514.1px;top:345.2px;font-size:10.9px">近半年</span><span class="h" style="left:584.6px;top:386.7px;font-size:10.6px">暂无信息</span><span class="h" style="left:584.6px;top:418.2px;font-size:10.6px">暂无信息</span><span class="h" style="left:584.6px;top:449.7px;font-size:10.6px">暂无信息</span><span class="h" style="left:584.6px;top:481.2px;font-size:10.6px">暂无信息</span><span class="h" style="left:584.6px;top:512.7px;font-size:10.6px">暂无信息</span><span class="h" style="left:351.7px;top:443.0px;font-size:11.0px">暂无信息</span><span class="h" style="left:341.9px;top:461.4px;font-size:9.0px">设备都很健康呢</span><span class="h" style="left:908.2px;top:42.5px;font-size:10.5px">总设备</span><span class="h" style="left:828.0px;top:132.8px;font-size:10.5px">正常</span><span class="h" style="left:828.0px;top:155.8px;font-size:10.5px">报警</span><span class="h" style="left:947.0px;top:132.8px;font-size:10.5px">异常</span><span class="h" style="left:947.0px;top:155.8px;font-size:10.5px">离线</span><span class="h" style="left:792.5px;top:199.6px;font-size:12.0px">数据存储空间</span><span class="h" style="left:903.0px;top:221.4px;font-size:10.5px">当前可用</span><span class="h" style="left:792.5px;top:273.6px;font-size:10.5px">已使用:72.49 GB/</span><span class="h" style="left:793.0px;top:340.8px;font-size:12.0px">设备地图</span><span class="h" style="left:52.8px;top:79.5px;font-size:9.0px">团队管理员</span><span class="h" style="left:39.6px;top:121.6px;font-size:10.8px">首页</span><span class="h" style="left:39.6px;top:160.6px;font-size:10.8px">设备接入</span><span class="h" style="left:39.6px;top:198.6px;font-size:10.8px">监控</span><span class="h" style="left:39.6px;top:237.6px;font-size:10.8px">数据</span><span class="h" style="left:39.6px;top:275.6px;font-size:10.8px">团队管理</span><span class="h" style="left:39.6px;top:314.6px;font-size:10.8px">应用管理</span><span class="h" style="left:71.2px;top:510.7px;font-size:10.6px">帮助中心</span><span class="h" style="left:257.8px;top:17.4px;font-size:11.5px">首页</span><span class="h" style="left:657.3px;top:17.4px;font-size:10.5px">切换至设备查看平台</span><span class="h" style="left:871.8px;top:391.0px;font-size:13.2px">中华人民共和国</span><span class="h" style="left:947.2px;top:506.2px;font-size:9.5px">南海</span><span class="h" style="left:812.5px;top:515.7px;font-size:9.0px">高德地图</span></div>
</body></html>
